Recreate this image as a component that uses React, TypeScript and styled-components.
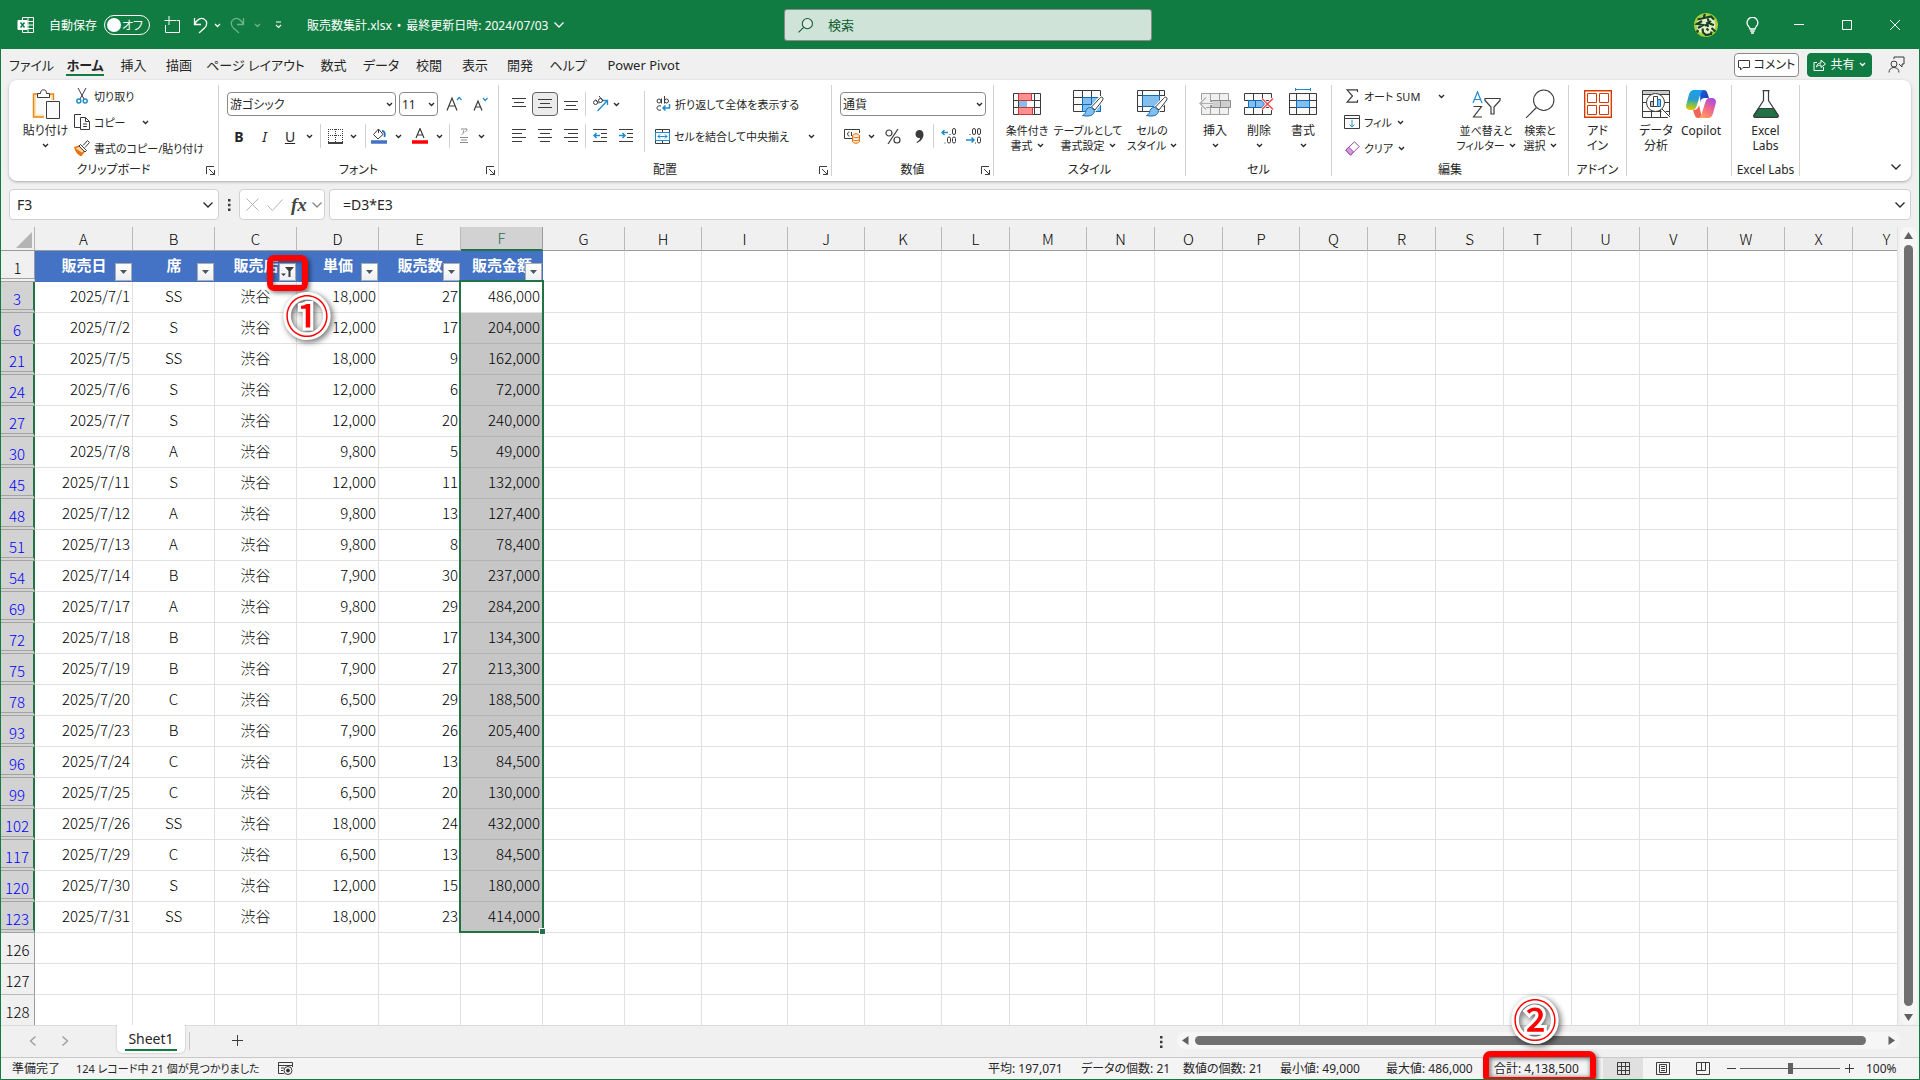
import React from "react";
import styled, { createGlobalStyle, css } from "styled-components";

const UI_FONT = '"Noto Sans", "Noto Sans CJK JP", sans-serif';
const CELL_FONT = '"Noto Sans CJK JP", "Noto Sans", sans-serif';
const GREEN = "#107c41";
const SEL_GREEN = "#217346";
const ROW_H = 31;

const Global = createGlobalStyle`
  *, *::before, *::after { box-sizing: border-box; }
  body { margin: 0; background: #fff; }
  button, input, select { font: inherit; color: inherit; margin: 0; }
  button { background: none; border: 0; padding: 0; cursor: pointer; }
  svg { display: block; flex: none; }
`;

const Window = styled.div`
  display: flex;
  flex-direction: column;
  height: 100vh;
  overflow: hidden;
  border: 1px solid ${GREEN};
  border-top: 0;
  background: #f0f0f0;
  color: #262626;
  font: 12px/15px ${UI_FONT};
  font-feature-settings: "palt";
  white-space: nowrap;
`;

/* ---------- title bar ---------- */

const TitleBar = styled.header`
  display: grid;
  grid-template-columns: 1fr 368px 1fr;
  align-items: center;
  flex: none;
  height: 49px;
  padding: 1px 0 0 16px;
  background: ${GREEN};
  color: #fff;
`;
const TitleLeft = styled.div`
  display: flex;
  align-items: center;
`;
const AutoSave = styled.label`
  display: flex;
  align-items: center;
  gap: 7px;
  margin: 0 8px 0 14px;
`;
const Switch = styled.span`
  position: relative;
  display: flex;
  align-items: center;
  justify-content: flex-end;
  width: 46px;
  height: 20px;
  padding-right: 6px;
  border: 1px solid #fff;
  border-radius: 10px;
  input {
    position: absolute;
    inset: 0;
    margin: 0;
    opacity: 0;
  }
  &::before {
    content: "";
    position: absolute;
    left: 2px;
    width: 14px;
    height: 14px;
    border-radius: 50%;
    background: #fff;
  }
`;
const QuickButton = styled.button<{ $w: number; $dim?: boolean }>`
  display: grid;
  place-items: center;
  width: ${(p) => p.$w}px;
  height: 24px;
  opacity: ${(p) => (p.$dim ? 0.4 : 1)};
`;
const FileTitle = styled.button`
  display: flex;
  align-items: center;
  gap: 5px;
  margin-left: 12px;
`;
const SearchBox = styled.label`
  display: flex;
  align-items: center;
  gap: 13px;
  height: 32px;
  padding-left: 13px;
  border: 1px solid #8a8a8a;
  border-radius: 3px;
  background: #cfe3d8;
  color: #0e5c2f;
  input {
    flex: 1;
    min-width: 0;
    border: 0;
    outline: 0;
    background: none;
    font-size: 13px;
    &::placeholder { color: #0e5c2f; opacity: 1; }
  }
`;
const TitleRight = styled.div`
  display: flex;
  align-items: center;
  justify-content: flex-end;
`;
const WindowButton = styled.button<{ $w: number }>`
  display: grid;
  place-items: center;
  width: ${(p) => p.$w}px;
  height: 48px;
`;

/* ---------- ribbon tabs ---------- */

const TabRow = styled.nav`
  display: flex;
  align-items: center;
  flex: none;
  height: 31px;
  padding: 0 7px 0 2px;
`;
const Tab = styled.button<{ $w: number; $active?: boolean }>`
  display: flex;
  justify-content: center;
  width: ${(p) => p.$w}px;
  span {
    height: 22px;
    padding-top: 2px;
    font-size: 13px;
    line-height: 18px;
    ${(p) => p.$active && css`font-weight: 700; border-bottom: 2px solid ${GREEN};`}
  }
`;
const TabActions = styled.div`
  display: flex;
  align-items: center;
  gap: 8px;
  margin-left: auto;
`;
const ActionButton = styled.button<{ $primary?: boolean }>`
  display: flex;
  align-items: center;
  justify-content: center;
  gap: 4px;
  width: 65px;
  height: 24px;
  border: 1px solid ${(p) => (p.$primary ? GREEN : "#8a8a8a")};
  border-radius: 4px;
  background: ${(p) => (p.$primary ? GREEN : "#fff")};
  color: ${(p) => (p.$primary ? "#fff" : "#262626")};
`;
const PresenceButton = styled.button`
  display: grid;
  place-items: center;
  width: 32px;
  height: 24px;
`;

/* ---------- ribbon ---------- */

const RibbonCard = styled.section`
  display: flex;
  flex: none;
  height: 101px;
  margin: 0 8px;
  padding: 5px 0 0;
  border-radius: 8px;
  background: #fff;
  box-shadow: 0 1px 3px rgba(0, 0, 0, 0.3);
`;
const GroupBox = styled.div<{ $w: number }>`
  display: flex;
  flex-direction: column;
  width: ${(p) => p.$w}px;
  height: 91px;
  border-right: 1px solid #d1d1d1;
`;
const GroupBody = styled.div<{ $pad: number }>`
  display: flex;
  flex: 1;
  min-height: 0;
  padding-left: ${(p) => p.$pad}px;
`;
const GroupFoot = styled.div`
  display: grid;
  grid-template-columns: 12px minmax(0, 1fr) 12px;
  align-items: center;
  height: 12px;
  line-height: 12px;
  text-align: center;
  span { grid-column: 2; display: flex; justify-content: center; }
`;
const BigButton = styled.button<{ $w: number; $compact?: boolean }>`
  display: flex;
  flex-direction: column;
  align-items: center;
  flex: none;
  width: ${(p) => p.$w}px;
  padding-top: 2px;
  font-size: ${(p) => (p.$compact ? 11 : 12)}px;
`;
const BigIcon = styled.span`
  display: grid;
  place-items: center;
  height: 34px;
  margin-bottom: 2px;
`;
const BigLine = styled.span`
  display: flex;
  align-items: center;
  justify-content: center;
  gap: 4px;
  height: 15px;
`;
const Stack = styled.div<{ $w: number }>`
  display: flex;
  flex-direction: column;
  flex: none;
  width: ${(p) => p.$w}px;
  margin-top: -2px;
`;
const SmallButton = styled.button`
  display: flex;
  align-items: center;
  height: 26px;
  font-size: 11px;
`;
const SmallIcon = styled.span`
  display: grid;
  place-items: center;
  width: 16px;
  margin-right: 4px;
`;
const SmallArrow = styled.span<{ $gap: number }>`
  margin-left: ${(p) => p.$gap}px;
`;
const Rows = styled.div`
  display: flex;
  flex-direction: column;
  flex: none;
  gap: 8px;
  padding-top: 7px;
`;
const ToolRow = styled.div`
  display: flex;
  align-items: center;
  height: 24px;
`;
const Tool = styled.button<{ $w: number; $active?: boolean }>`
  display: grid;
  place-items: center;
  width: ${(p) => p.$w}px;
  height: 24px;
  font-size: 14px;
  ${(p) =>
    p.$active &&
    css`
      border: 1px solid #616161;
      border-radius: 4px;
      background: #ebebeb;
    `}
`;
const Divider = styled.span<{ $w: number }>`
  display: flex;
  justify-content: center;
  width: ${(p) => p.$w}px;
  height: 24px;
  &::before {
    content: "";
    width: 1px;
    background: #d1d1d1;
  }
`;
const TallDivider = styled.span`
  flex: none;
  width: 1px;
  height: 61px;
  margin: 6px 10px 0 5px;
  background: #d1d1d1;
`;
const Combo = styled.span<{ $w: number }>`
  display: grid;
  align-items: center;
  width: ${(p) => p.$w}px;
  height: 24px;
  margin-right: 3px;
  select {
    grid-area: 1 / 1;
    width: 100%;
    height: 24px;
    padding: 0 2px;
    border: 1px solid #8a8a8a;
    border-radius: 4px;
    background: #fff;
    appearance: none;
  }
  svg {
    grid-area: 1 / 1;
    justify-self: end;
    margin-right: 3px;
    pointer-events: none;
  }
`;
const TextTool = styled.button<{ $w?: number }>`
  display: flex;
  align-items: center;
  justify-content: space-between;
  ${(p) => p.$w && `width: ${p.$w}px;`}
  height: 24px;
  font-size: 11px;
  span {
    display: flex;
    align-items: center;
    gap: 4px;
  }
`;
const CollapseButton = styled.button`
  align-self: flex-end;
  margin: 0 9px 10px auto;
`;

/* ---------- formula bar ---------- */

const FormulaRow = styled.section`
  display: flex;
  flex: none;
  height: 46px;
  padding: 8px 8px 0;
`;
const Box = styled.div<{ $w?: number }>`
  display: flex;
  align-items: center;
  ${(p) => (p.$w ? `width: ${p.$w}px;` : "flex: 1; min-width: 0;")}
  height: 31px;
  border: 1px solid #d1d1d1;
  border-radius: 4px;
  background: #fff;
  font-size: 14px;
  input {
    flex: 1;
    min-width: 0;
    padding: 0 0 0 7px;
    border: 0;
    outline: 0;
    background: none;
  }
  button { margin-right: 4px; }
`;
const FormulaInput = styled.input`
  && { padding-left: 13px; }
`;
const Dots = styled.span`
  display: grid;
  place-items: center;
  width: 20px;
  height: 31px;
`;
const FxBox = styled(Box)`
  gap: 8px;
  margin-right: 4px;
  padding-left: 6px;
  button { margin: 0; }
  button:last-child { margin-left: -4px; }
`;
const FxMark = styled.button`
  font: italic 700 19px/20px "Liberation Serif", serif;
  color: #444;
`;

/* ---------- sheet ---------- */

const SheetArea = styled.main`
  display: flex;
  flex: 1;
  min-height: 0;
`;
const GridClip = styled.div`
  flex: 1;
  min-width: 0;
  overflow: hidden;
  border-right: 1px solid #e1e1e1;
  background: #fff;
`;
const Grid = styled.table`
  width: 100%;
  table-layout: fixed;
  border-collapse: separate;
  border-spacing: 0;
  color: #000;
  font: 300 15px/20px ${CELL_FONT};
  font-feature-settings: normal;
`;
const Corner = styled.td`
  height: 24px;
  padding: 0;
  border-right: 1px solid #b5b5b5;
  border-bottom: 1px solid #9b9b9b;
  background: #f0f0f0;
  svg { margin: 2px 2px 0 auto; }
`;
const ColHead = styled.th<{ $sel: boolean }>`
  height: 24px;
  padding: 0;
  border-right: 1px solid ${(p) => (p.$sel ? "#9b9b9b" : "#b9b9b9")};
  border-bottom: ${(p) => (p.$sel ? `2px solid ${SEL_GREEN}` : "1px solid #9b9b9b")};
  background: ${(p) => (p.$sel ? "#d2d2d2" : "#f0f0f0")};
  color: ${(p) => (p.$sel ? SEL_GREEN : "#000")};
  font-weight: 300;
`;
const RowHead = styled.th<{ $sel: boolean; $gap: boolean }>`
  height: ${ROW_H}px;
  padding: ${(p) => (p.$gap ? 7 : 4)}px 0 0;
  border-right: ${(p) => (p.$sel ? `2px solid ${SEL_GREEN}` : "1px solid #9b9b9b")};
  border-bottom: ${(p) => (p.$gap ? "4px double #a3a3a3" : "1px solid #b9b9b9")};
  background: ${(p) => (p.$sel ? "#d2d2d2" : "#f0f0f0")};
  color: ${(p) => (p.$sel ? "#0000ff" : "#000")};
  font-weight: 300;
`;
const Cell = styled.td<{ $align?: string; $fill?: boolean }>`
  position: relative;
  height: ${ROW_H}px;
  padding: 0 2px 2px;
  border-right: 1px solid #e1e1e1;
  border-bottom: 1px solid #e1e1e1;
  text-align: ${(p) => p.$align || "left"};
  ${(p) => p.$fill && css`background: #c6c6c6; border-color: #b4b4b4;`}
`;
const FieldHead = styled.td`
  position: relative;
  height: ${ROW_H}px;
  padding: 0 0 3px;
  background: #4472c4;
  color: #fff;
  font-weight: 700;
  text-align: center;
`;
const FilterButton = styled.button`
  position: absolute;
  right: 1px;
  bottom: 1px;
  display: grid;
  place-items: center;
  width: 17px;
  height: 18px;
  border: 1px solid #ababab;
  background: linear-gradient(#fff, #eceff3);
`;
const Selection = styled.span`
  position: absolute;
  z-index: 2;
  top: -2px;
  left: -2px;
  right: -2px;
  border: 2px solid ${SEL_GREEN};
  pointer-events: none;
  &::after {
    content: "";
    position: absolute;
    right: -4px;
    bottom: -4px;
    width: 7px;
    height: 7px;
    border: 1px solid #fff;
    background: ${SEL_GREEN};
  }
`;
const HeadMark = styled.span`
  position: absolute;
  z-index: 3;
  right: -11px;
  top: 4px;
  width: 41px;
  height: 36px;
  border: 6px solid #f00;
  border-radius: 7px;
  box-shadow: 2px 2px 4px rgba(0, 0, 0, 0.5), inset 1px 1px 4px rgba(0, 0, 0, 0.5);
  pointer-events: none;
`;
const StepNumber = styled.span<{ $x: number; $y: number }>`
  position: absolute;
  z-index: 4;
  left: ${(p) => p.$x}px;
  top: ${(p) => p.$y}px;
  width: 46px;
  color: #f00;
  font: 500 44px/46px "Noto Sans CJK JP", sans-serif;
  text-align: center;
  paint-order: stroke fill;
  -webkit-text-stroke: 6px #fff;
  filter: drop-shadow(2px 2px 3px rgba(0, 0, 0, 0.6));
  pointer-events: none;
`;
const VScroll = styled.div`
  display: flex;
  flex-direction: column;
  align-items: center;
  justify-content: space-between;
  width: 17px;
  margin: 0 2px;
  padding: 4px 0 3px;
  border-radius: 8px;
  background: #f6f6f6;
`;
const VThumb = styled.span`
  flex: 1;
  width: 9px;
  margin: 5px 0 7px;
  border-radius: 5px;
  background: #707070;
`;

/* ---------- sheet tabs and status ---------- */

const SheetBar = styled.div`
  display: flex;
  flex: none;
  height: 32px;
  padding-left: 16px;
  border-top: 1px solid #dcdcdc;
`;
const SheetNav = styled.button<{ $w: number }>`
  display: grid;
  place-items: center;
  width: ${(p) => p.$w}px;
  height: 29px;
`;
const SheetTab = styled.button`
  width: 68px;
  height: 28px;
  margin: -1px 4px 0 36px;
  border-radius: 0 0 5px 5px;
  background: #fff;
  box-shadow: 0 0 2px rgba(0, 0, 0, 0.3);
  clip-path: inset(0 -3px -3px -3px);
  span {
    display: block;
    height: 23px;
    margin: 0 8px;
    border-bottom: 2px solid ${GREEN};
    font-size: 14px;
    line-height: 22px;
  }
`;
const TabRule = styled.span`
  width: 1px;
  height: 18px;
  margin-top: 6px;
  background: #c8c8c8;
`;
const HScroll = styled.div`
  display: flex;
  align-items: center;
  width: 38%;
  height: 17px;
  margin: 6px 19px 0 6px;
  padding: 0 4px;
  border-radius: 8px;
  background: #f6f6f6;
`;
const HThumb = styled.span`
  flex: 1;
  height: 9px;
  margin: 0 21px 0 5px;
  border-radius: 5px;
  background: #707070;
`;
const HDots = styled.span`
  display: grid;
  place-items: center;
  width: 20px;
  height: 31px;
  margin-left: auto;
`;
const StatusBar = styled.footer`
  display: flex;
  align-items: center;
  flex: none;
  height: 22px;
  padding-left: 11px;
  border-top: 1px solid #c8c8c8;
  background: #f4f4f4;
`;
const StatusItem = styled.span<{ $w?: number; $small?: boolean }>`
  position: relative;
  flex: none;
  width: ${(p) => (p.$w ? `${p.$w}px` : "auto")};
  font-size: ${(p) => (p.$small ? 11 : 12)}px;
`;
const Spacer = styled.span`
  flex: 1;
`;
const TotalMark = styled.span`
  position: absolute;
  z-index: 3;
  left: -11px;
  top: -10px;
  width: 113px;
  height: 32px;
  border: 6px solid #f00;
  border-radius: 7px;
  box-shadow: 2px 2px 4px rgba(0, 0, 0, 0.5), inset 1px 1px 4px 1px rgba(0, 0, 0, 0.5);
  pointer-events: none;
`;
const ViewButton = styled.button<{ $active?: boolean }>`
  display: grid;
  place-items: center;
  flex: none;
  width: 40px;
  height: 21px;
  background: ${(p) => (p.$active ? "#e0e0e0" : "none")};
`;
const ZoomButton = styled.button`
  display: grid;
  place-items: center;
  flex: none;
  width: 16px;
`;
const ZoomRange = styled.input`
  flex: none;
  width: 100px;
  height: 12px;
  && { margin: 0 1px; }
  appearance: none;
  background: linear-gradient(#616161, #616161) center / 100% 1px no-repeat;
  &::-webkit-slider-thumb {
    appearance: none;
    width: 5px;
    height: 11px;
    background: #616161;
  }
`;
const ZoomValue = styled.button`
  flex: none;
  width: 62px;
  && { padding-left: 9px; }
  text-align: left;
`;

/* ---------- icons ---------- */

type IconProps = { w: number; h: number; children: React.ReactNode; stroke?: string; sw?: number };
const Icon = ({ w, h, children, stroke = "#3b3b3b", sw = 1 }: IconProps) => (
  <svg width={w} height={h} viewBox={`0 0 ${w} ${h}`} fill="none" stroke={stroke} strokeWidth={sw} aria-hidden="true">
    {children}
  </svg>
);
const Chevron = ({ color = "#262626", big = false }: { color?: string; big?: boolean }) =>
  big ? (
    <Icon w={12} h={8} stroke={color} sw={1.3}><path d="M1.500 1.500L6 6l4.500-4.500" /></Icon>
  ) : (
    <Icon w={7} h={5} stroke={color} sw={1.3}><path d="M1 1l2.500 2.500L6 1" /></Icon>
  );
const Launcher = () => (
  <Icon w={9} h={9}><path d="M.500 8V.500H8M3 3l5 5M8.500 4v4.500H4" /></Icon>
);

const ExcelIcon = () => (
  <Icon w={18} h={16} stroke="#fff">
    <path d="M5.500 3V.500h11v15h-11V13M11 .500v15M5 4.500h12M10 8h7M5 11.500h12" />
    <path d="M1 3.500h9v9H1z" fill="#fff" />
    <path d="M3.500 5.500l4 5M7.500 5.500l-4 5" stroke={GREEN} strokeWidth="1.500" />
  </Icon>
);
const SaveIcon = () => (
  <Icon w={17} h={18} stroke="#fff"><path d="M1.500 9v7.500h14v-12h-3M.500 4.500h9M5 0v9M8 4.500h4" /></Icon>
);
const UndoIcon = () => (
  <Icon w={15} h={18} stroke="#fff" sw={1.3}><path d="M1.500 2v6.500H8M1.500 8.500C4 3 8 1.500 11 3c3.500 2 3.500 6.500.500 9L6 17" /></Icon>
);
const RedoIcon = () => (
  <Icon w={15} h={18} stroke="#fff" sw={1.3}><path d="M13.500 2v6.500H7M13.500 8.500C11 3 7 1.500 4 3 .500 5 .500 9.500 3.500 12L9 17" /></Icon>
);
const MagnifierIcon = ({ size, color, sw = 1 }: { size: number; color: string; sw?: number }) => (
  <svg width={size} height={size} viewBox="0 0 28 28" fill="none" stroke={color} strokeWidth={sw} aria-hidden="true">
    <circle cx="17.500" cy="10.500" r="9.500" fill="rgba(255,255,255,.3)" /><path d="M10.500 17.500L1 27" />
  </svg>
);
const Avatar = () => (
  <Icon w={24} h={24} stroke="#16401f" sw={2.2}>
    <circle cx="12" cy="12" r="12" fill="#a5cf3a" stroke="none" />
    <circle cx="12" cy="12" r="9.500" fill="#e4edc8" stroke="none" />
    <path d="M11 1L9.500 5M3.500 6.500L10 5l7-1.500 3 3M8 8L3 11l6 1-5 3M14 5.500c0 4 2 6 6 6.500M17 8l-6 5M13 9l1 5M4 17l-1 2.500M8.500 15.500l.500 4 3 2.500 5-1 .500-2.500M12.500 15.500l2 2M17.500 15l4 3.500" />
  </Icon>
);
const BulbIcon = () => (
  <Icon w={13} h={17} stroke="#fff" sw={1.3}><path d="M4 12C4 10 1 9 1 5.800a5.400 5.400 0 0 1 10.900 0C11.900 9 9 10 9 12zM4.200 14h4.600M5 16h3" /></Icon>
);
const CommentIcon = () => (
  <Icon w={12} h={12}><path d="M.500 1.500h11v7H5L2.500 11V8.500h-2z" /></Icon>
);
const ShareIcon = () => (
  <Icon w={13} h={13} stroke="#fff"><path d="M4 4.500H1v8h9.500V9M3.500 9C4 6 5.500 5 8 5V2l4.500 4L8 9.500V7C6 7 5 7.500 3.500 9z" /></Icon>
);
const PresenceIcon = () => (
  <Icon w={17} h={17}><circle cx="6" cy="8" r="3" /><path d="M1 16.500c0-3 2-5 5-5s5 2 5 5M6 3V1h10v7h-2v3l-3-3" /></Icon>
);

const PasteIcon = () => (
  <Icon w={28} h={30}>
    <path d="M1.500 5h20v23h-20z" fill="#fbe3b0" stroke="#e8861a" strokeWidth="1.500" />
    <path d="M4 7.500h15v18H4z" fill="#fafafa" stroke="none" />
    <path d="M5.500 8.500v-4h3C8.500 2 9.500 .800 11.500.800S14.500 2 14.500 4.500h3v4z" fill="#fff" />
    <path d="M13.500 12.500h14v17h-14z" fill="#fff" stroke="#fff" strokeWidth="3" />
    <path d="M14.500 12.500h13v17h-13z" fill="#fafafa" />
  </Icon>
);
const CutIcon = () => (
  <Icon w={12} h={16}><path d="M2 0l6 11M10 0L4 11" /><g stroke="#1e8bcd" strokeWidth="1.500"><circle cx="2.800" cy="13" r="2" /><circle cx="9.200" cy="13" r="2" /></g></Icon>
);
const CopyIcon = () => (
  <Icon w={16} h={16}><path d="M6 13.500H.500v-13H7M6.500 3.500h5l4 4v8h-9zM11.500 3.500v4h4M9 10h4M9 12.500h4" /></Icon>
);
const PainterIcon = () => (
  <Icon w={16} h={16}><path d="M5.500 6L1 7.500c1 4 3 6.500 6 8l3.500-4.500z" fill="#fbd5a8" stroke="#e8700a" strokeWidth="1.500" /><path d="M1.500 9.500l6.500 4M4 12.500l3 2.500" stroke="#e8700a" strokeWidth="1.500" /><path d="M9 5.500l4.500-5 2 2-4.500 5M6.500 4.500l6 6-1.500 1.500-6-6z" fill="#fff" /></Icon>
);
const FontSize = ({ up = false }: { up?: boolean }) => (
  <Icon w={16} h={16} sw={1.2}>
    {up ? <path d="M1 14.500L6 2l5 12.500M3 10h6" /> : <path d="M1 14.500L5 5l4 9.500M2.500 11h5" />}
    <path d={up ? "M11 4l2.200-2.500L15.500 4" : "M10 2l2.200 2.500L14.500 2"} stroke="#1e8bcd" />
  </Icon>
);
const BorderIcon = () => (
  <Icon w={15} h={15}><path d="M.500 0v13M7.500 0v13M14.500 0v13M0 .500h15M0 6.500h15" strokeDasharray="1 1" /><path d="M0 14h15" strokeWidth="1.500" stroke="#000" /></Icon>
);
const FillIcon = () => (
  <Icon w={16} h={16}><path d="M2.500 6.500L7.500 1l4.500 5.500-5 4.500zM7.500 1v4" /><path d="M11 3c2 0 3.500 2 2.500 6" stroke="#1e6fb8" strokeWidth="1.800" /><path d="M0 14h16" stroke="#4472c4" strokeWidth="3.500" /></Icon>
);
const FontColorIcon = () => (
  <Icon w={16} h={16} sw={1.2}><path d="M4 10L8 .500 12 10M5.500 7h5" /><path d="M0 14h16" stroke="#f00" strokeWidth="3.500" /></Icon>
);
const PhoneticIcon = () => (
  <Icon w={10} h={16} stroke="#8a8a8a"><path d="M2 1h6c0 2-1 2.500-2.500 3M4.500 2.500C4.500 5 4 6 2.500 6.500M1 9.500h8M2 12h6M1 14.500h8" /></Icon>
);
const Lines = ({ rows }: { rows: [number, number, number][] }) => (
  <Icon w={14} h={14}>{rows.map(([x, y, len]) => <path key={y} d={`M${x} ${y}h${len}`} />)}</Icon>
);
const OrientIcon = () => (
  <Icon w={17} h={16}>
    <circle cx="3.500" cy="6.500" r="2" /><path d="M3.500 3.500l3.500 4M7 0l4 5" /><circle cx="8.500" cy="4.500" r="2" />
    <path d="M5.500 15L15.500 4.500M11 4.500h4.500V9" stroke="#1e8bcd" strokeWidth="1.300" />
  </Icon>
);
const IndentIcon = ({ out = false }: { out?: boolean }) => (
  <Icon w={15} h={14}><path d="M0 .500h14M8 4.500h6M8 8.500h6M0 12.500h14" /><path d={out ? "M7 6.500H1M3.500 4L1 6.500 3.500 9" : "M0 6.500h6M3.500 4L6 6.500 3.500 9"} stroke="#1e8bcd" strokeWidth="1.500" /></Icon>
);
const WrapIcon = () => (
  <Icon w={16} h={16}><circle cx="4" cy="5" r="2" /><path d="M6.500 2.500V7.500M9.500 0v7.500" /><circle cx="11.500" cy="5" r="2" /><path d="M6 10C3 9 2 11 2 12s1 3 4 2" /><path d="M14.500 8v4H8M10.500 9.500L8 12l2.500 2.500" stroke="#1e8bcd" strokeWidth="1.500" /></Icon>
);
const MergeIcon = () => (
  <Icon w={15} h={15}><path d="M.500.500h14v14H.500zM7.500.500v3M7.500 11.500v3" /><path d="M.500 3.500h14v8H.500z" stroke="#1e8bcd" fill="#f3f9fd" /><path d="M3 7.500h9M5 5.500l-2 2 2 2M10 5.500l2 2-2 2" stroke="#1e8bcd" /></Icon>
);
const MoneyIcon = () => (
  <Icon w={17} h={16}><path d="M8 10.500H.500v-9h15V5M5.500 4C3 3.500 3 8.500 5.500 8M7.500 4v4" /><path d="M8.500 8c0-3 7-3 7 0v5c0 3-7 3-7 0zM8.500 8c0 2 7 2 7 0M8.500 11c0 2 7 2 7 0" fill="#fde3c8" stroke="#e8700a" /></Icon>
);
const PercentIcon = () => (
  <Icon w={16} h={15} sw={1.2}><circle cx="4" cy="4" r="3" /><circle cx="12" cy="11" r="3" /><path d="M13 0L3 15" /></Icon>
);
const CommaIcon = () => (
  <Icon w={9} h={13} stroke="none"><path d="M4.500 0C7 0 8.500 2 8.500 4.500 8.500 8.500 5.500 11.500 2 13l-.500-1C4 10.500 5 9.500 5 8 2.500 8.500.500 6.500.500 4.200S2 0 4.500 0z" fill="#3b3b3b" /></Icon>
);
const DecimalIcon = ({ more = false }: { more?: boolean }) => (
  <Icon w={16} h={16}>
    {more ? (
      <>
        <path d="M7 4.500H1M3.500 2L1 4.500 3.500 7" stroke="#1e8bcd" strokeWidth="1.500" />
        <rect x="11.500" y=".500" width="3" height="6" rx="1.500" />
        <rect x="6.500" y="9" width="3" height="6" rx="1.500" />
        <rect x="11.500" y="9" width="3" height="6" rx="1.500" />
        <path d="M8.500 6.500h1M3.500 15h1" />
      </>
    ) : (
      <>
        <path d="M0 12h8M5.500 9.500L8 12l-2.500 2.500" stroke="#1e8bcd" strokeWidth="1.500" />
        <rect x="6.500" y=".500" width="3" height="6" rx="1.500" />
        <rect x="11.500" y=".500" width="3" height="6" rx="1.500" />
        <rect x="11.500" y="9" width="3" height="6" rx="1.500" />
        <path d="M3.500 6.500h1M9 15h1" />
      </>
    )}
  </Icon>
);
const Brush = () => (
  <g>
    <path d="M29.500 7.500c1 .800.500 2-.500 3.500l-7.500 10-4-3 8.500-9.500c1.500-1.500 2.500-2 3.500-1z" fill="#fff" stroke="#fff" strokeWidth="2.500" />
    <path d="M29.500 7.500c1 .800.500 2-.500 3.500l-7 9-3.500-3 8-8.500c1.200-1.400 2.200-1.700 3-1z" fill="#fff" />
    <path d="M18 17.500l3.500 3c0 5-6 6.500-12 5 3-1 2.500-2.500 3.500-5s3.500-3.500 5-3z" fill="#83beec" stroke="#0f6cbd" />
  </g>
);
const CondIcon = () => (
  <Icon w={28} h={22}><path d="M.500.500h27v21H.500zM.500 7.500h27M.500 14.500h27M5.500.500v21M21.500.500v21" fill="#fafafa" /><path d="M5.500.500h13v7h-13zM5.500 14.500h14v7h-14z" fill="#ff9090" stroke="#d13438" /><path d="M6 8h8v6H6z" fill="#83beec" stroke="none" /></Icon>
);
const TableFmtIcon = () => (
  <Icon w={31} h={28}><path d="M.500.500h27v21H.500zM.500 7.500h27M.500 14.500h27M9.500.500v21M18.500.500v21" fill="#fafafa" /><path d="M9.500 7.500h18v14h-18zM9.500 14.500h18M18.500 7.500v14" fill="#83beec" stroke="#0f6cbd" /><Brush /></Icon>
);
const CellStyleIcon = () => (
  <Icon w={31} h={28}><path d="M.500.500h27v21H.500zM5.500.500v21M22.500.500v21M.500 5.500h27M.500 16.500h27" fill="#fafafa" /><path d="M5.500 5.500h17v11h-17z" fill="#83beec" stroke="#0f6cbd" /><Brush /></Icon>
);
const InsertIcon = () => (
  <Icon w={32} h={22} stroke="#a0a0a0"><path d="M2.500.500h27v21h-27zM2.500 14.500h27M11.500.500v21M20.500.500v21" fill="#f0f0f0" /><path d="M12.500 7.500h19v7h-19zM21.500 7.500v7" fill="#cfcfcf" stroke="#8a8a8a" /><path d="M14 10.500H1M7 4.500l-6 6 6 6" stroke="#fff" strokeWidth="3" /><path d="M14 10.500H1M7 4.500l-6 6 6 6" stroke="#b0b0b0" strokeWidth="1.500" /></Icon>
);
const DeleteIcon = () => (
  <Icon w={30} h={22}><path d="M.500 7.500v-7h27v7M.500 14.500v7h27v-7M.500 7.500h27M.500 14.500h27M9.500.500v7M18.500.500v7M9.500 14.500v7M18.500 14.500v7" fill="#fafafa" /><path d="M4.500 7.500h13l3 3.500-3 3.500h-13zM11.500 7.500v7" fill="#83beec" stroke="#0f6cbd" /><path d="M18 5.500l11 11M29 5.500l-11 11" stroke="#fff" strokeWidth="3" /><path d="M18 5.500l11 11M29 5.500l-11 11" stroke="#ef4b4b" strokeWidth="1.500" /></Icon>
);
const FormatIcon = () => (
  <Icon w={28} h={32}><path d="M.500 5.500h27v21H.500zM.500 12.500h27M.500 19.500h27M7.500 5.500v21M20.500 5.500v21" fill="#fafafa" /><path d="M7.500 12.500h13v7h-13z" fill="#83beec" stroke="#0f6cbd" /><path d="M6.500 1.500h15M6.500 0v3M21.500 0v3" stroke="#1e8bcd" /></Icon>
);
const SumIcon = () => <Icon w={13} h={14} sw={1.2}><path d="M11.500 3V.800H1L6.500 7 1 13.200h10.500V11" /></Icon>;
const FillDownIcon = () => <Icon w={16} h={14}><path d="M.500.500h15v13H.500zM.500 3.500h15" /><path d="M8 5v7M5.500 9.500L8 12l2.500-2.500" stroke="#1e8bcd" /></Icon>;
const EraserIcon = () => <Icon w={15} h={15} stroke="#9b45a8"><path d="M.800 9L9.500.800l4.700 4.700-8.700 8.700z" fill="#fff" /><path d="M.800 9l3-2.800 4.700 4.700-3 3.300z" fill="#d59bdd" /></Icon>;
const SortIcon = () => (
  <Icon w={29} h={27} sw={1.2}><path d="M1 12L5.500 1 10 12M2.500 8.500h6" stroke="#1e8bcd" /><path d="M1.500 15.500h8l-8 10.500h8.500M13 7.500h15v2l-6 6.500v7h-3v-7l-6-6.500z" /></Icon>
);
const AddinIcon = () => (
  <Icon w={28} h={28} stroke="#d83b01"><path d="M.700.700h26.600v26.600H.700z" strokeWidth="1.400" /><path d="M3.500 3.500h9v9h-9zM15.500 3.500h9v9h-9zM3.500 15.500h9v9h-9zM15.500 15.500h9v9h-9z" /></Icon>
);
const DataIcon = () => (
  <Icon w={29} h={28}>
    <path d="M.500.500h27v27H.500zM.500 12.500h27M.500 21.500h27M9.500 4v23M18.500 4v23" fill="#fafafa" /><path d="M1 1h26v3H1z" fill="#c8c8c8" stroke="none" /><path d="M.500 4.500h27" />
    <path d="M20 20l8 7.500" stroke="#fff" strokeWidth="3" /><circle cx="13.500" cy="12.500" r="9" fill="#fff" /><path d="M20 19l8 8" />
    <path d="M8.500 11.500h3v5h-3z" fill="#c8c8c8" /><path d="M11.500 6.500h4v10h-4z" fill="#fff" /><path d="M15.500 9.500h3v7h-3z" fill="#83beec" stroke="#0f6cbd" />
  </Icon>
);
const CopilotIcon = () => (
  <svg width="30" height="28" viewBox="0 0 30 28" aria-hidden="true">
    <defs>
      <linearGradient id="cpA" x1="0.300" y1="0" x2="0.200" y2="1"><stop offset="0" stopColor="#1aa0ee" /><stop offset=".45" stopColor="#2b9ad0" /><stop offset=".7" stopColor="#6fbf5a" /><stop offset="1" stopColor="#f5c400" /></linearGradient>
      <linearGradient id="cpB" x1="0.800" y1="0" x2="0.300" y2="1"><stop offset="0" stopColor="#a64be8" /><stop offset=".5" stopColor="#f0658c" /><stop offset="1" stopColor="#ffa05a" /></linearGradient>
      <linearGradient id="cpC" x1="0" y1="0" x2="1" y2="1"><stop offset="0" stopColor="#1f5fe0" /><stop offset="1" stopColor="#1638b0" /></linearGradient>
    </defs>
    <path d="M14 0h3.500c2.500 0 3.500 1.500 4.200 4l1.300 4h-4c-3 0-4 1.500-4.700 4z" fill="url(#cpC)" />
    <path d="M8 0h10c-2 .500-3 2-3.800 4.500l-3.400 11C10 18 9 20 6 20H4C1 20-.500 18 .300 14.500L3 4.500C3.800 1.500 5.500 0 8 0z" fill="url(#cpA)" />
    <path d="M16 28h-3.500c-2.500 0-3.500-1.500-4.200-4L7 20c4 0 5-1.500 6-5z" fill="#f2635c" />
    <path d="M22 28H12c2-.500 3-2 3.800-4.500l3.400-11C20 10 21 8 24 8h2c3 0 4.500 2 3.700 5.500L27 23.500c-.8 3-2.500 4.500-5 4.500z" fill="url(#cpB)" />
  </svg>
);
const FlaskIcon = () => (
  <Icon w={26} h={28} sw={1.2}><path d="M9.500.600h7M10.500.600v10L1 25c-.500 1.500 0 2.400 1.500 2.400h21c1.500 0 2-.9 1.500-2.400l-9.500-14.400v-10" /><path d="M5.500 18.500h15L25 25.500c.300 1-.200 1.900-1.500 1.900h-21c-1.300 0-1.800-.9-1.500-1.900z" fill="#217346" /></Icon>
);
const DotsIcon = () => <Icon w={3} h={12} stroke="none"><path d="M0 0h2.500v2.500H0zM0 4.700h2.500v2.500H0zM0 9.400h2.500v2.500H0z" fill="#3b3b3b" /></Icon>;
const Triangle = ({ dir }: { dir: "up" | "down" | "left" | "right" }) => {
  const d = { up: "M4.500 1L9 8H0z", down: "M0 1h9L4.500 8z", left: "M7.500 0v9L1 4.500z", right: "M1.500 0v9L8 4.500z" }[dir];
  return <Icon w={9} h={9} stroke="none"><path d={d} fill="#616161" /></Icon>;
};

/* ---------- data ---------- */

const COLS: [string, number][] = [
  ["A", 98], ["B", 82], ["C", 82], ["D", 82], ["E", 82], ["F", 82], ["G", 82], ["H", 77], ["I", 86],
  ["J", 77], ["K", 77], ["L", 68], ["M", 77], ["N", 68], ["O", 68], ["P", 77], ["Q", 68], ["R", 68],
  ["S", 68], ["T", 68], ["U", 68], ["V", 68], ["W", 77], ["X", 68], ["Y", 68],
];
const FIELDS = ["販売日", "席", "販売店", "単価", "販売数", "販売金額"];
const RECORDS: [number, string, string, number, number][] = [
  [3, "1", "SS", 18000, 27], [6, "2", "S", 12000, 17], [21, "5", "SS", 18000, 9], [24, "6", "S", 12000, 6],
  [27, "7", "S", 12000, 20], [30, "8", "A", 9800, 5], [45, "11", "S", 12000, 11], [48, "12", "A", 9800, 13],
  [51, "13", "A", 9800, 8], [54, "14", "B", 7900, 30], [69, "17", "A", 9800, 29], [72, "18", "B", 7900, 17],
  [75, "19", "B", 7900, 27], [78, "20", "C", 6500, 29], [93, "23", "B", 7900, 26], [96, "24", "C", 6500, 13],
  [99, "25", "C", 6500, 20], [102, "26", "SS", 18000, 24], [117, "29", "C", 6500, 13], [120, "30", "S", 12000, 15],
  [123, "31", "SS", 18000, 23],
];
const EMPTY_ROWS = [126, 127, 128];
const TABS: [string, number][] = [
  ["ファイル", 57], ["ホーム", 50], ["挿入", 47], ["描画", 44], ["ページ レイアウト", 109], ["数式", 47],
  ["データ", 48], ["校閲", 48], ["表示", 44], ["開発", 46], ["ヘルプ", 50], ["Power Pivot", 101],
];
const num = (n: number) => n.toLocaleString("en-US");

/* ---------- composed parts ---------- */

const Group = ({ w, pad = 0, label, launcher, children }: {
  w: number; pad?: number; label?: string; launcher?: boolean; children: React.ReactNode;
}) => (
  <GroupBox $w={w}>
    <GroupBody $pad={pad}>{children}</GroupBody>
    <GroupFoot>
      <span>{label}</span>
      {launcher && <button aria-label={`${label}の設定`}><Launcher /></button>}
    </GroupFoot>
  </GroupBox>
);
const Big = ({ w, icon, lines, arrow, compact }: {
  w: number; icon: React.ReactNode; lines: string[]; arrow?: "inline" | "below"; compact?: boolean;
}) => (
  <BigButton $w={w} $compact={compact}>
    <BigIcon>{icon}</BigIcon>
    {lines.map((t, i) => (
      <BigLine key={t}>{t}{arrow === "inline" && i === lines.length - 1 && <Chevron />}</BigLine>
    ))}
    {arrow === "below" && <BigLine><Chevron /></BigLine>}
  </BigButton>
);
const Small = ({ icon, text, gap }: { icon: React.ReactNode; text: string; gap?: number }) => (
  <SmallButton>
    <SmallIcon>{icon}</SmallIcon>{text}
    {gap !== undefined && <SmallArrow $gap={gap}><Chevron /></SmallArrow>}
  </SmallButton>
);
const Arrow = ({ w, name }: { w: number; name: string }) => <Tool $w={w} aria-label={name}><Chevron /></Tool>;

const Ribbon = () => (
  <RibbonCard>
    <Group w={210} pad={8} label="クリップボード" launcher>
      <Big w={57} icon={<PasteIcon />} lines={["貼り付け"]} arrow="below" />
      <Stack $w={140}>
        <Small icon={<CutIcon />} text="切り取り" />
        <Small icon={<CopyIcon />} text="コピー" gap={16} />
        <Small icon={<PainterIcon />} text="書式のコピー/貼り付け" />
      </Stack>
    </Group>
    <Group w={280} pad={8} label="フォント" launcher>
      <Rows>
        <ToolRow>
          <Combo $w={169}><select aria-label="フォント名"><option>游ゴシック</option></select><Chevron /></Combo>
          <Combo $w={39}><select aria-label="フォント サイズ"><option>11</option></select><Chevron /></Combo>
          <Tool $w={26} aria-label="拡大"><FontSize up /></Tool>
          <Tool $w={28} aria-label="縮小"><FontSize /></Tool>
        </ToolRow>
        <ToolRow>
          <Tool $w={24}><b>B</b></Tool>
          <Tool $w={27}><i>I</i></Tool>
          <Tool $w={24}><u>U</u></Tool>
          <Arrow w={14} name="下線" />
          <Divider $w={9} />
          <Tool $w={20} aria-label="罫線"><BorderIcon /></Tool>
          <Arrow w={16} name="罫線の種類" />
          <Divider $w={8} />
          <Tool $w={20} aria-label="塗りつぶし"><FillIcon /></Tool>
          <Arrow w={18} name="塗りつぶしの色" />
          <Tool $w={26} aria-label="フォントの色"><FontColorIcon /></Tool>
          <Arrow w={12} name="色の一覧" />
          <Divider $w={9} />
          <Tool $w={20} aria-label="ふりがな"><PhoneticIcon /></Tool>
          <Arrow w={14} name="ふりがなの設定" />
        </ToolRow>
      </Rows>
    </Group>
    <Group w={333} pad={7} label="配置" launcher>
      <Rows>
        <ToolRow>
          <Tool $w={26} aria-label="上揃え"><Lines rows={[[0, 1.5, 14], [2, 5.5, 10], [0, 9.5, 14]]} /></Tool>
          <Tool $w={26} $active aria-label="上下中央揃え"><Lines rows={[[0, 2.5, 14], [2, 6.5, 10], [0, 10.5, 14]]} /></Tool>
          <Tool $w={26} aria-label="下揃え"><Lines rows={[[0, 4.5, 14], [2, 8.5, 10], [0, 12.5, 14]]} /></Tool>
          <Divider $w={3} />
          <Tool $w={26} aria-label="方向"><OrientIcon /></Tool>
          <Arrow w={7} name="方向の設定" />
        </ToolRow>
        <ToolRow>
          <Tool $w={26} aria-label="左揃え"><Lines rows={[[0, 0.5, 14], [0, 4.5, 10], [0, 8.5, 14], [0, 12.5, 10]]} /></Tool>
          <Tool $w={26} aria-label="中央揃え"><Lines rows={[[0, 0.5, 14], [2, 4.5, 10], [0, 8.5, 14], [2, 12.5, 10]]} /></Tool>
          <Tool $w={26} aria-label="右揃え"><Lines rows={[[0, 0.5, 14], [4, 4.5, 10], [0, 8.5, 14], [4, 12.5, 10]]} /></Tool>
          <Divider $w={3} />
          <Tool $w={26} aria-label="インデントを減らす"><IndentIcon out /></Tool>
          <Tool $w={26} aria-label="インデントを増やす"><IndentIcon /></Tool>
        </ToolRow>
      </Rows>
      <TallDivider />
      <Rows>
        <TextTool><span><WrapIcon />折り返して全体を表示する</span></TextTool>
        <TextTool $w={160}><span><MergeIcon />セルを結合して中央揃え</span><Chevron /></TextTool>
      </Rows>
    </Group>
    <Group w={162} pad={8} label="数値" launcher>
      <Rows>
        <Combo $w={146}><select aria-label="表示形式"><option>通貨</option></select><Chevron /></Combo>
        <ToolRow>
          <Tool $w={24} aria-label="通貨表示形式"><MoneyIcon /></Tool>
          <Arrow w={14} name="通貨の種類" />
          <Tool $w={30} aria-label="パーセント"><PercentIcon /></Tool>
          <Tool $w={22} aria-label="桁区切り"><CommaIcon /></Tool>
          <Divider $w={7} />
          <Tool $w={24} aria-label="小数点以下を増やす"><DecimalIcon more /></Tool>
          <Tool $w={26} aria-label="小数点以下を減らす"><DecimalIcon /></Tool>
        </ToolRow>
      </Rows>
    </Group>
    <Group w={192} pad={4} label="スタイル">
      <Big w={58} compact icon={<CondIcon />} lines={["条件付き", "書式"]} arrow="inline" />
      <Big w={64} compact icon={<TableFmtIcon />} lines={["テーブルとして", "書式設定"]} arrow="inline" />
      <Big w={64} compact icon={<CellStyleIcon />} lines={["セルの", "スタイル"]} arrow="inline" />
    </Group>
    <Group w={146} pad={7} label="セル">
      <Big w={44} icon={<InsertIcon />} lines={["挿入"]} arrow="below" />
      <Big w={44} icon={<DeleteIcon />} lines={["削除"]} arrow="below" />
      <Big w={44} icon={<FormatIcon />} lines={["書式"]} arrow="below" />
    </Group>
    <Group w={237} pad={12} label="編集">
      <Stack $w={112}>
        <Small icon={<SumIcon />} text="オート SUM" gap={18} />
        <Small icon={<FillDownIcon />} text="フィル" gap={5} />
        <Small icon={<EraserIcon />} text="クリア" gap={5} />
      </Stack>
      <Big w={60} compact icon={<SortIcon />} lines={["並べ替えと", "フィルター"]} arrow="inline" />
      <Big w={48} compact icon={<MagnifierIcon size={30} color="#3b3b3b" />} lines={["検索と", "選択"]} arrow="inline" />
    </Group>
    <Group w={58} label="アドイン">
      <Big w={57} icon={<AddinIcon />} lines={["アド", "イン"]} />
    </Group>
    <Group w={105} pad={6}>
      <Big w={46} icon={<DataIcon />} lines={["データ", "分析"]} />
      <Big w={44} icon={<CopilotIcon />} lines={["Copilot"]} />
    </Group>
    <Group w={68} label="Excel Labs">
      <Big w={67} icon={<FlaskIcon />} lines={["Excel", "Labs"]} />
    </Group>
    <CollapseButton aria-label="リボンを折りたたむ"><Chevron big /></CollapseButton>
  </RibbonCard>
);

const Blank = ({ from }: { from: number }) => <>{COLS.slice(from).map(([c]) => <Cell key={c} />)}</>;

const Sheet = () => (
  <Grid>
    <colgroup>
      <col width={34} />
      {COLS.map(([c, w]) => <col key={c} width={w} />)}
    </colgroup>
    <thead>
      <tr>
        <Corner><Icon w={16} h={16} stroke="none"><path d="M16 0v16H0z" fill="#b4b4b4" /></Icon></Corner>
        {COLS.map(([c]) => <ColHead key={c} scope="col" $sel={c === "F"}>{c}</ColHead>)}
      </tr>
    </thead>
    <tbody>
      <tr>
        <RowHead scope="row" $sel={false} $gap>1</RowHead>
        {FIELDS.map((f) => (
          <FieldHead key={f}>
            {f}
            <FilterButton aria-label={`${f}のフィルター`}>
              {f === "販売店" ? (
                <Icon w={13} h={12} stroke="none"><path d="M4 1h9L9.500 5v6H7.500V5zM0 7.500h5L2.500 10z" fill="#3b3b3b" /></Icon>
              ) : (
                <Icon w={7} h={4} stroke="none"><path d="M0 0h7L3.500 4z" fill="#555" /></Icon>
              )}
            </FilterButton>
            {f === "販売店" && <><HeadMark /><StepNumber $x={69} $y={40}>①</StepNumber></>}
          </FieldHead>
        ))}
        <Blank from={6} />
      </tr>
      {RECORDS.map(([row, day, seat, price, count], i) => (
        <tr key={row}>
          <RowHead scope="row" $sel $gap>{row}</RowHead>
          <Cell $align="right">2025/7/{day}</Cell>
          <Cell $align="center">{seat}</Cell>
          <Cell $align="center">渋谷</Cell>
          <Cell $align="right">{num(price)}</Cell>
          <Cell $align="right">{count}</Cell>
          <Cell $align="right" $fill={i > 0}>
            {num(price * count)}
            {i === 0 && <Selection style={{ height: RECORDS.length * ROW_H + 2 }} />}
          </Cell>
          <Blank from={6} />
        </tr>
      ))}
      {EMPTY_ROWS.map((row) => (
        <tr key={row}>
          <RowHead scope="row" $sel={false} $gap={false}>{row}</RowHead>
          <Blank from={0} />
        </tr>
      ))}
    </tbody>
  </Grid>
);

export default function App() {
  return (
    <Window>
      <Global />
      <TitleBar>
        <TitleLeft>
          <ExcelIcon />
          <AutoSave>自動保存<Switch><input type="checkbox" />オフ</Switch></AutoSave>
          <QuickButton $w={28} aria-label="保存"><SaveIcon /></QuickButton>
          <QuickButton $w={28} aria-label="元に戻す"><UndoIcon /></QuickButton>
          <QuickButton $w={7} aria-label="元に戻す一覧"><Chevron color="#fff" /></QuickButton>
          <QuickButton $w={33} $dim aria-label="やり直し"><RedoIcon /></QuickButton>
          <QuickButton $w={7} $dim aria-label="やり直し一覧"><Chevron color="#fff" /></QuickButton>
          <QuickButton $w={34} aria-label="クイック アクセスの設定"><Icon w={7} h={8} stroke="#fff" sw={1.2}><path d="M1 1h5M1 4l2.500 2.500L6 4" /></Icon></QuickButton>
          <FileTitle><span>販売数集計.xlsx</span><span>•</span><span>最終更新日時: 2024/07/03</span><Chevron color="#fff" big /></FileTitle>
        </TitleLeft>
        <SearchBox><MagnifierIcon size={15} color="#0e5c2f" sw={2} /><input type="search" placeholder="検索" aria-label="検索" /></SearchBox>
        <TitleRight>
          <WindowButton $w={46} aria-label="アカウント"><Avatar /></WindowButton>
          <WindowButton $w={46} aria-label="ヒント"><BulbIcon /></WindowButton>
          <WindowButton $w={48} aria-label="最小化"><Icon w={10} h={10} stroke="#fff"><path d="M0 4.500h10" /></Icon></WindowButton>
          <WindowButton $w={48} aria-label="最大化"><Icon w={10} h={10} stroke="#fff"><path d="M.500.500h9v9h-9z" /></Icon></WindowButton>
          <WindowButton $w={48} aria-label="閉じる"><Icon w={10} h={10} stroke="#fff"><path d="M0 0l10 10M10 0L0 10" /></Icon></WindowButton>
        </TitleRight>
      </TitleBar>
      <TabRow>
        {TABS.map(([t, w]) => <Tab key={t} $w={w} $active={t === "ホーム"}><span>{t}</span></Tab>)}
        <TabActions>
          <ActionButton><CommentIcon />コメント</ActionButton>
          <ActionButton $primary><ShareIcon />共有<Chevron color="#fff" /></ActionButton>
          <PresenceButton aria-label="共同編集"><PresenceIcon /></PresenceButton>
        </TabActions>
      </TabRow>
      <Ribbon />
      <FormulaRow>
        <Box $w={210}><input aria-label="名前ボックス" defaultValue="F3" /><button aria-label="名前の一覧"><Chevron big /></button></Box>
        <Dots><DotsIcon /></Dots>
        <FxBox $w={86}>
          <button aria-label="キャンセル"><Icon w={13} h={13} stroke="#b4b4b4"><path d="M.500.500l12 12M12.500.500l-12 12" /></Icon></button>
          <button aria-label="入力"><Icon w={16} h={12} stroke="#b4b4b4"><path d="M.500 6.500l5 5L15.500.500" /></Icon></button>
          <FxMark>fx</FxMark>
          <button aria-label="関数"><Chevron big color="#8a8a8a" /></button>
        </FxBox>
        <Box><FormulaInput aria-label="数式バー" defaultValue="=D3*E3" /><button aria-label="数式バーの展開"><Chevron big /></button></Box>
      </FormulaRow>
      <SheetArea>
        <GridClip><Sheet /></GridClip>
        <VScroll><Triangle dir="up" /><VThumb /><Triangle dir="down" /></VScroll>
      </SheetArea>
      <SheetBar>
        <SheetNav $w={32} aria-label="前のシート"><Icon w={8} h={10} stroke="#9a9a9a" sw={1.3}><path d="M6.500.500L1.500 5l5 4.500" /></Icon></SheetNav>
        <SheetNav $w={32} aria-label="次のシート"><Icon w={8} h={10} stroke="#9a9a9a" sw={1.3}><path d="M1.500.500l5 4.500-5 4.500" /></Icon></SheetNav>
        <SheetTab><span>Sheet1</span></SheetTab>
        <TabRule />
        <SheetNav $w={95} aria-label="新しいシート"><Icon w={11} h={11}><path d="M0 5.500h11M5.500 0v11" /></Icon></SheetNav>
        <HDots><DotsIcon /></HDots>
        <HScroll><Triangle dir="left" /><HThumb /><Triangle dir="right" /></HScroll>
      </SheetBar>
      <StatusBar>
        <StatusItem $w={64}>準備完了</StatusItem>
        <StatusItem $w={202} $small>124 レコード中 21 個が見つかりました</StatusItem>
        <button aria-label="マクロの記録">
          <Icon w={15} h={13}><path d="M14.500 5V.500H.500v11H6M.500 3.500h14M3 6h3M3 8.500h2" /><circle cx="10" cy="8.500" r="4" /><circle cx="10" cy="8.500" r="1.500" fill="#262626" /></Icon>
        </button>
        <Spacer />
        <StatusItem $w={93}>平均: 197,071</StatusItem>
        <StatusItem $w={102}>データの個数: 21</StatusItem>
        <StatusItem $w={97}>数値の個数: 21</StatusItem>
        <StatusItem $w={106}>最小値: 49,000</StatusItem>
        <StatusItem $w={108}>最大値: 486,000</StatusItem>
        <StatusItem $w={109}>
          合計: 4,138,500
          <TotalMark />
          <StepNumber $x={18} $y={-66}>②</StepNumber>
        </StatusItem>
        <ViewButton $active aria-label="標準"><Icon w={13} h={13}><path d="M.500.500h12v12H.500zM.500 4.500h12M.500 8.500h12M4.500.500v12M8.500.500v12" /></Icon></ViewButton>
        <ViewButton aria-label="ページ レイアウト表示"><Icon w={14} h={13}><path d="M.500.500h13v12H.500zM3.500 2.500h7v8h-7zM5 4.500h4M5 6.500h4M5 8.500h4" /></Icon></ViewButton>
        <ViewButton aria-label="改ページ プレビュー"><Icon w={14} h={13}><path d="M.500.500h13v12H.500zM.500 8.500h9v-8M5.500.500v8" /></Icon></ViewButton>
        <ZoomButton aria-label="縮小表示"><Icon w={9} h={9}><path d="M0 4.500h9" /></Icon></ZoomButton>
        <ZoomRange type="range" min={0} max={200} defaultValue={100} aria-label="ズーム" />
        <ZoomButton aria-label="拡大表示"><Icon w={9} h={9}><path d="M0 4.500h9M4.500 0v9" /></Icon></ZoomButton>
        <ZoomValue>100%</ZoomValue>
      </StatusBar>
    </Window>
  );
}
